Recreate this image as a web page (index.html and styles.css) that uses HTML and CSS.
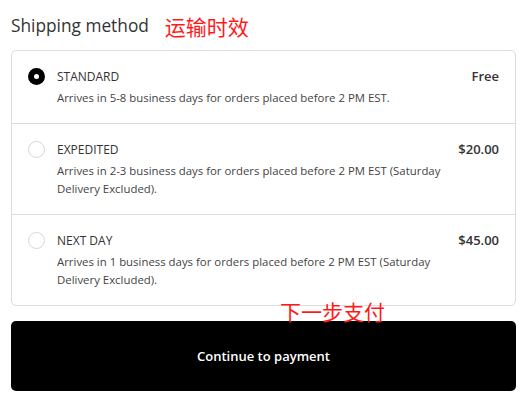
FILE: index.html
```html
<!DOCTYPE html>
<html>

<head>
    <meta charset="utf-8">
    <title>Shipping method</title>
    <link rel="stylesheet" href="styles.css">
</head>

<body>
    <div id="checkout">
        <div class="heading">
            <h2>Shipping method</h2>
            <span class="note">运输时效</span>
        </div>
        <div class="methods">
            <label class="method">
                <span class="radio checked"></span>
                <span class="info">
                    <span class="name">STANDARD</span>
                    <span class="desc">Arrives in 5-8 business days for orders placed before 2 PM EST.</span>
                </span>
                <span class="price">Free</span>
            </label>
            <label class="method">
                <span class="radio"></span>
                <span class="info">
                    <span class="name">EXPEDITED</span>
                    <span class="desc">Arrives in 2-3 business days for orders placed before 2 PM EST (Saturday Delivery Excluded).</span>
                </span>
                <span class="price">$20.00</span>
            </label>
            <label class="method">
                <span class="radio"></span>
                <span class="info">
                    <span class="name">NEXT DAY</span>
                    <span class="desc">Arrives in 1 business days for orders placed before 2 PM EST (Saturday Delivery Excluded).</span>
                </span>
                <span class="price">$45.00</span>
            </label>
        </div>
        <div class="actions">
            <span class="note note-pay">下一步支付</span>
            <button class="continue">Continue to payment</button>
        </div>
    </div>
</body>

</html>
```

FILE: styles.css
```css
body {
    font-family: "Open Sans", "Noto Sans", sans-serif;
    background: #fff;
    color: #333;
    margin: 0;
    padding: 0;
}

#checkout {
    width: 505px;
    padding: 12px 12px 0 11px;
}

.heading {
    display: flex;
    align-items: center;
    height: 26px;
}

.heading h2 {
    margin: 0;
    font-size: 17.3px;
    font-weight: normal;
    color: #333;
}

.note {
    font-family: "Noto Sans CJK SC", sans-serif;
    color: #ff1a1a;
    font-size: 21px;
    line-height: 1;
}

.heading .note {
    margin-left: 16px;
    margin-top: 2px;
}

.methods {
    margin-top: 12px;
    border: 1px solid #dcdcdc;
    border-radius: 5px;
}

.method {
    display: flex;
    align-items: flex-start;
    padding: 17px 16px 16px 16px;
    border-top: 1px solid #dcdcdc;
}

.method:first-child {
    border-top: none;
}

.radio {
    width: 17px;
    height: 17px;
    box-sizing: border-box;
    border: 1px solid #d6d6d6;
    border-radius: 50%;
    margin: 0 12px 0 0;
    flex-shrink: 0;
}

.radio.checked {
    border: 6px solid #000;
    background: #fff;
}

.info {
    display: flex;
    flex-direction: column;
    width: 395px;
}

.name {
    font-size: 12px;
    line-height: 17px;
    color: #333;
}

.desc {
    margin-top: 4px;
    font-size: 11.4px;
    line-height: 18px;
    color: #444;
}

.price {
    margin-left: auto;
    font-size: 13px;
    font-weight: 600;
    line-height: 17px;
    color: #333;
}

.actions {
    position: relative;
    padding-top: 15px;
}

.note-pay {
    position: absolute;
    left: 269px;
    top: -5px;
}

.continue {
    width: 100%;
    height: 70px;
    background: #000;
    color: #fff;
    border: none;
    border-radius: 5px;
    font-family: "Open Sans", "Noto Sans", sans-serif;
    font-size: 13px;
    font-weight: 600;
}
```
